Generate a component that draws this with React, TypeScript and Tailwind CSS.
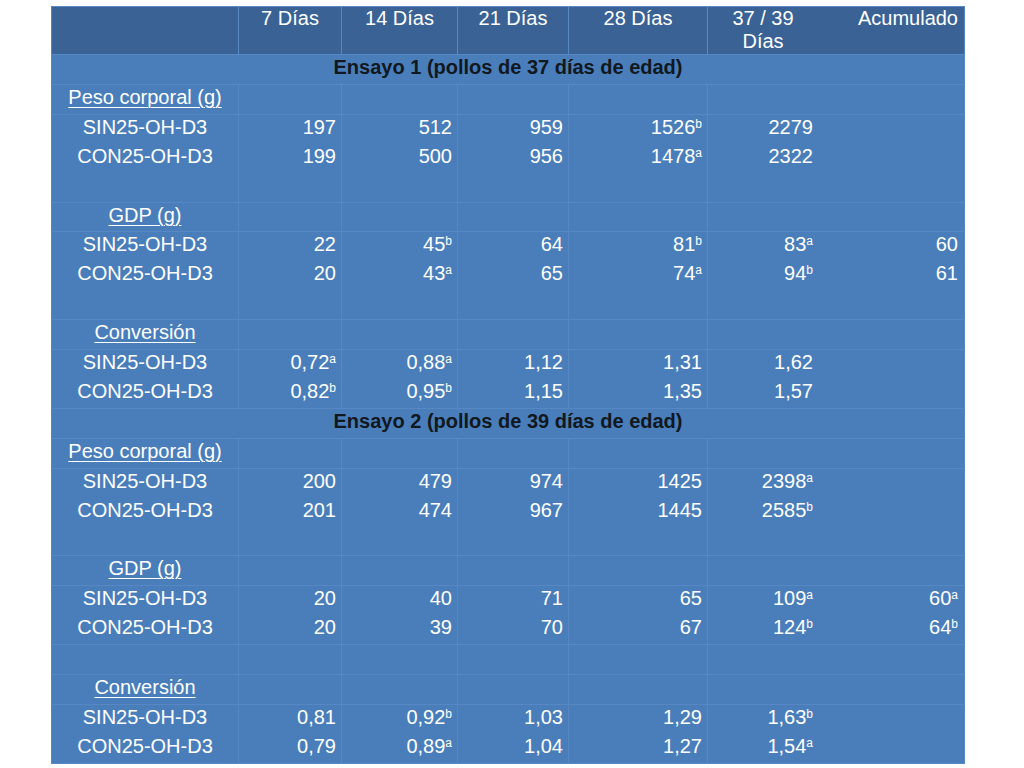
import React from 'react';

type Row = { label: string; values: string[] };
type Block =
  | { kind: 'title'; text: string }
  | { kind: 'label'; text: string }
  | { kind: 'data'; rows: Row[]; extra: number }
  | { kind: 'blank' };

const headers = ['7 Días', '14 Días', '21 Días', '28 Días'];

const blocks: Block[] = [
  { kind: 'title', text: 'Ensayo 1 (pollos de 37 días de edad)' },
  { kind: 'label', text: 'Peso corporal (g)' },
  {
    kind: 'data',
    extra: 1,
    rows: [
      { label: 'SIN25-OH-D3', values: ['197', '512', '959', '1526^b', '2279', ''] },
      { label: 'CON25-OH-D3', values: ['199', '500', '956', '1478^a', '2322', ''] },
    ],
  },
  { kind: 'label', text: 'GDP (g)' },
  {
    kind: 'data',
    extra: 1,
    rows: [
      { label: 'SIN25-OH-D3', values: ['22', '45^b', '64', '81^b', '83^a', '60'] },
      { label: 'CON25-OH-D3', values: ['20', '43^a', '65', '74^a', '94^b', '61'] },
    ],
  },
  { kind: 'label', text: 'Conversión' },
  {
    kind: 'data',
    extra: 0,
    rows: [
      { label: 'SIN25-OH-D3', values: ['0,72^a', '0,88^a', '1,12', '1,31', '1,62', ''] },
      { label: 'CON25-OH-D3', values: ['0,82^b', '0,95^b', '1,15', '1,35', '1,57', ''] },
    ],
  },
  { kind: 'title', text: 'Ensayo 2 (pollos de 39 días de edad)' },
  { kind: 'label', text: 'Peso corporal (g)' },
  {
    kind: 'data',
    extra: 1,
    rows: [
      { label: 'SIN25-OH-D3', values: ['200', '479', '974', '1425', '2398^a', ''] },
      { label: 'CON25-OH-D3', values: ['201', '474', '967', '1445', '2585^b', ''] },
    ],
  },
  { kind: 'label', text: 'GDP (g)' },
  {
    kind: 'data',
    extra: 0,
    rows: [
      { label: 'SIN25-OH-D3', values: ['20', '40', '71', '65', '109^a', '60^a'] },
      { label: 'CON25-OH-D3', values: ['20', '39', '70', '67', '124^b', '64^b'] },
    ],
  },
  { kind: 'blank' },
  { kind: 'label', text: 'Conversión' },
  {
    kind: 'data',
    extra: 0,
    rows: [
      { label: 'SIN25-OH-D3', values: ['0,81', '0,92^b', '1,03', '1,29', '1,63^b', ''] },
      { label: 'CON25-OH-D3', values: ['0,79', '0,89^a', '1,04', '1,27', '1,54^a', ''] },
    ],
  },
];

const Val: React.FC<{ v: string }> = ({ v }) => {
  if (!v) return <>{'\u00a0'}</>;
  const [base, sup] = v.split('^');
  return (
    <>
      {base}
      {sup && <sup className="text-[12px]">{sup}</sup>}
    </>
  );
};

// body cells: text sits 2px higher than a plain line box, height kept the same
const cell = 'border border-[#5788c3] align-top p-0';
const body = `${cell} pb-[2px]`;
const colBorder = (i: number) => (i === 5 ? 'border-r-transparent' : i === 6 ? 'border-l-transparent' : '');

const App: React.FC = () => {
  return (
    <div className="w-[1024px] h-[768px] bg-white pt-[6px] pl-[51px] font-['Liberation_Sans',Arial,sans-serif] text-white text-[20px]">
      <table className="table-fixed border-collapse w-[913px]">
        <colgroup>
          <col className="w-[187px]" />
          <col className="w-[103px]" />
          <col className="w-[116px]" />
          <col className="w-[111px]" />
          <col className="w-[139px]" />
          <col className="w-[111px]" />
          <col className="w-[146px]" />
        </colgroup>
        <thead>
          <tr className="bg-[#3a6295] h-[48px] leading-[23px]">
            <th className={`${cell} font-normal`}></th>
            {headers.map((h) => (
              <th key={h} className={`${cell} font-normal text-center`}>
                {h}
              </th>
            ))}
            <th className={`${cell} ${colBorder(5)} font-normal text-center`}>
              37 / 39
              <br />
              Días
            </th>
            <th className={`${cell} ${colBorder(6)} font-normal text-right pr-[6px]`}>Acumulado</th>
          </tr>
        </thead>
        <tbody className="bg-[#4a7ebb] leading-[28.9px]">
          {blocks.map((b, bi) => {
            if (b.kind === 'title') {
              return (
                <tr key={bi}>
                  <td colSpan={7} className={`${body} text-center font-bold text-[#111820]`}>
                    <div className="-mt-[2px]">{b.text}</div>
                  </td>
                </tr>
              );
            }
            if (b.kind === 'label') {
              return (
                <tr key={bi}>
                  <td className={`${body} text-center`}>
                    <div className="-mt-[2px]">
                      <span className="underline underline-offset-[3px] decoration-1">{b.text}</span>
                    </div>
                  </td>
                  {[0, 1, 2, 3, 4, 5].map((i) => (
                    <td key={i} className={`${body} ${colBorder(i + 1)}`}></td>
                  ))}
                </tr>
              );
            }
            if (b.kind === 'blank') {
              return (
                <tr key={bi}>
                  {[0, 1, 2, 3, 4, 5, 6].map((i) => (
                    <td key={i} className={`${body} ${colBorder(i)}`}>
                      <div className="-mt-[2px]">{'\u00a0'}</div>
                    </td>
                  ))}
                </tr>
              );
            }
            const blanks = Array.from({ length: b.extra }, (_, k) => <div key={`x${k}`}>{'\u00a0'}</div>);
            return (
              <tr key={bi}>
                <td className={`${body} text-center`}>
                  <div className="-mt-[2px]">
                    {b.rows.map((r) => (
                      <div key={r.label}>{r.label}</div>
                    ))}
                    {blanks}
                  </div>
                </td>
                {[0, 1, 2, 3, 4, 5].map((i) => (
                  <td key={i} className={`${body} ${colBorder(i + 1)} text-right ${i === 5 ? 'pr-[6px]' : 'pr-[5px]'}`}>
                    <div className="-mt-[2px]">
                      {b.rows.map((r) => (
                        <div key={r.label}>
                          <Val v={r.values[i]} />
                        </div>
                      ))}
                      {blanks}
                    </div>
                  </td>
                ))}
              </tr>
            );
          })}
        </tbody>
      </table>
    </div>
  );
};

export default App;
